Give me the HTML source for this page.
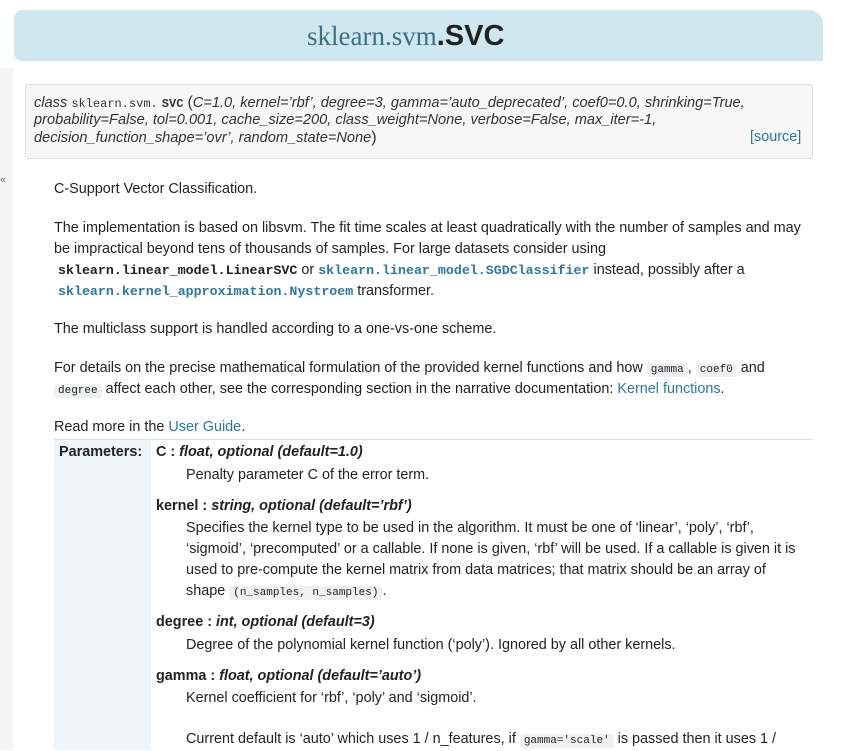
<!DOCTYPE html>
<html><head><meta charset="utf-8"><style>
*{margin:0;padding:0;box-sizing:border-box}
body{width:843px;height:750px;overflow:hidden;background:#fff;font-family:"Liberation Sans",Arial,sans-serif;font-size:14.4px;color:#222;position:relative}
.l{position:absolute;white-space:nowrap;line-height:20px}
.mono{font-family:"Liberation Mono",monospace;font-size:12px}
.code{font-family:"Liberation Mono",monospace;font-size:11px;background:#eef0f2;border-radius:3px;padding:1px 4px}
a{color:#2878a2;text-decoration:none}
.lk{color:#2878a2;font-family:"Liberation Mono",monospace;font-weight:bold;font-size:13.3px}
.bk{font-family:"Liberation Mono",monospace;font-weight:bold;font-size:13.3px}
</style></head><body>
<div style="position:absolute;left:0;top:68px;width:13px;height:682px;background:#f4f4f4"></div>
<div class="l" style="left:0;top:170px;font-size:11px;color:#777">«</div>
<div style="position:absolute;left:14px;top:10px;width:809px;height:51px;background:#cfe8ef;border-radius:8px 14px 0 8px"></div>
<div class="l" style="left:307px;top:19px;line-height:34px;font-size:29px"><span style="font-family:'Liberation Serif',serif;color:#3a6f86;font-size:27px">sklearn.svm</span><b style="color:#222">.SVC</b></div>
<div style="position:absolute;left:25px;top:84px;width:788px;height:75px;background:#f7f7f7;border:1px solid #ddd;border-radius:3px"></div>
<div class="l" style="left:34px;top:93px;font-style:italic;color:#333;font-size:14.6px">class <span class="mono" style="font-style:normal">sklearn.svm.</span> <b class="mono" style="font-style:normal">SVC</b> <span style="font-style:normal;font-size:16px">(</span>C=1.0, kernel=’rbf’, degree=3, gamma=’auto_deprecated’, coef0=0.0, shrinking=True,</div>
<div class="l" style="left:34px;top:110px;font-style:italic;color:#333;font-size:14.6px">probability=False, tol=0.001, cache_size=200, class_weight=None, verbose=False, max_iter=-1,</div>
<div class="l" style="left:34px;top:128px;font-style:italic;color:#333;font-size:14.6px">decision_function_shape=’ovr’, random_state=None<span style="font-style:normal;font-size:16px">)</span></div>
<div class="l" style="left:750px;top:127px"><a>[source]</a></div>

<div class="l" style="left:54px;top:179px">C-Support Vector Classification.</div>
<div class="l" style="left:54px;top:218px">The implementation is based on libsvm. The fit time scales at least quadratically with the number of samples and may</div>
<div class="l" style="left:54px;top:239px">be impractical beyond tens of thousands of samples. For large datasets consider using</div>
<div class="l" style="left:58px;top:260px"><span class="bk">sklearn.linear_model.LinearSVC</span> or <span class="lk">sklearn.linear_model.SGDClassifier</span> instead, possibly after a</div>
<div class="l" style="left:58px;top:281px"><span class="lk">sklearn.kernel_approximation.Nystroem</span> transformer.</div>
<div class="l" style="left:54px;top:319px">The multiclass support is handled according to a one-vs-one scheme.</div>
<div class="l" style="left:54px;top:358px">For details on the precise mathematical formulation of the provided kernel functions and how <span class="code">gamma</span>, <span class="code">coef0</span> and</div>
<div class="l" style="left:54px;top:379px"><span class="code">degree</span> affect each other, see the corresponding section in the narrative documentation: <a>Kernel functions</a>.</div>
<div class="l" style="left:54px;top:417px">Read more in the <a>User Guide</a>.</div>

<div style="position:absolute;left:54px;top:439px;width:759px;border-top:1px solid #ddd"></div>
<div style="position:absolute;left:54px;top:440px;width:97px;height:310px;background:#eef6f9"></div>
<div class="l" style="left:59px;top:442px;font-weight:bold">Parameters:</div>
<div class="l" style="left:156px;top:442px;font-weight:bold">C : <i>float, optional (default=1.0)</i></div>
<div class="l" style="left:186px;top:465px">Penalty parameter C of the error term.</div>
<div class="l" style="left:156px;top:496px;font-weight:bold">kernel : <i>string, optional (default=’rbf’)</i></div>
<div class="l" style="left:186px;top:518px">Specifies the kernel type to be used in the algorithm. It must be one of ‘linear’, ‘poly’, ‘rbf’,</div>
<div class="l" style="left:186px;top:539px">‘sigmoid’, ‘precomputed’ or a callable. If none is given, ‘rbf’ will be used. If a callable is given it is</div>
<div class="l" style="left:186px;top:560px">used to pre-compute the kernel matrix from data matrices; that matrix should be an array of</div>
<div class="l" style="left:186px;top:581px">shape <span class="code">(n_samples, n_samples)</span>.</div>
<div class="l" style="left:156px;top:612px;font-weight:bold">degree : <i>int, optional (default=3)</i></div>
<div class="l" style="left:186px;top:635px">Degree of the polynomial kernel function (‘poly’). Ignored by all other kernels.</div>
<div class="l" style="left:156px;top:666px;font-weight:bold">gamma : <i>float, optional (default=’auto’)</i></div>
<div class="l" style="left:186px;top:688px">Kernel coefficient for ‘rbf’, ‘poly’ and ‘sigmoid’.</div>
<div class="l" style="left:186px;top:729px">Current default is ‘auto’ which uses 1 / n_features, if <span class="code">gamma='scale'</span> is passed then it uses 1 /</div>
</body></html>
